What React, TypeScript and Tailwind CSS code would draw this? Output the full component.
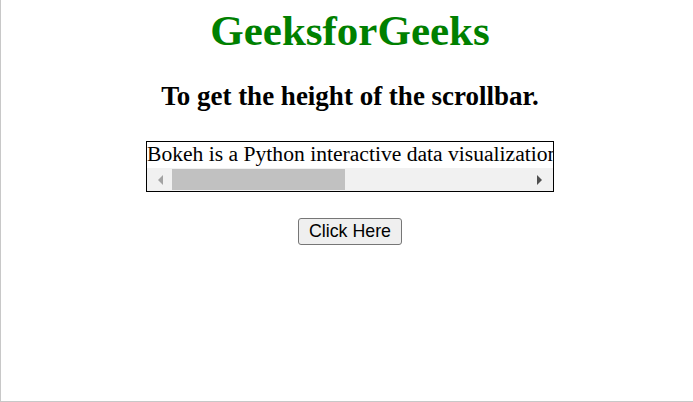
export default function App() {
  return (
    <div className="h-[402px] w-[693px] bg-white border-l border-b border-[#c8c8c8] pl-[6px] flex flex-col items-center font-['Liberation_Serif',serif] text-black">
      <h1 className="mt-[6px] text-[43px] leading-[normal] font-bold text-[#008000]">GeeksforGeeks</h1>
      <h3 className="mt-[26px] text-[27px] leading-[normal] font-bold">To get the height of the scrollbar.</h3>

      <div className="mt-[29px] w-[408px] border border-black">
        <div className="h-[26px] overflow-hidden whitespace-nowrap text-[21.6px] leading-[25px]">
          Bokeh is a Python interactive data visualization library for modern web browsers.
        </div>
        {/* fake horizontal scrollbar */}
        <div className="h-[23px] bg-[#f1f1f1] flex items-center">
          <div className="w-[25px] flex justify-center pl-[2px]">
            <svg width="6" height="10" viewBox="0 0 6 10">
              <path d="M5 0 L0 5 L5 10 Z" fill="#a3a3a3" />
            </svg>
          </div>
          <div className="w-[173px] h-[21px] bg-[#c1c1c1]" />
          <div className="flex-1" />
          <div className="w-[25px] flex justify-center pr-[2px]">
            <svg width="6" height="10" viewBox="0 0 6 10">
              <path d="M0 0 L5 5 L0 10 Z" fill="#505050" />
            </svg>
          </div>
        </div>
      </div>

      <button className="mt-[26px] w-[104px] h-[27px] bg-[#efefef] border border-[#767676] rounded-[3px] font-['Liberation_Sans',Arial,sans-serif] text-[17.8px] leading-none text-black">
        Click Here
      </button>
    </div>
  );
}
